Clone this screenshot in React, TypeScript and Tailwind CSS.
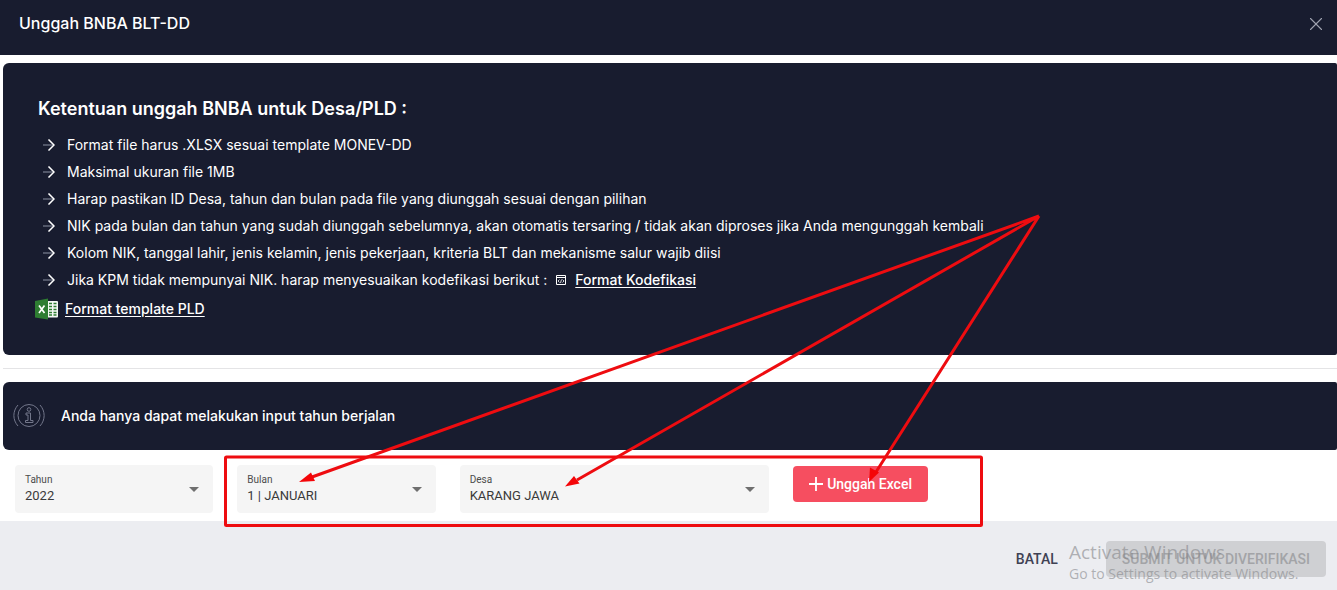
import type { ReactNode } from 'react'
import { LuX } from 'react-icons/lu'

interface SelectFieldProps {
  id: string
  label: string
  options: string[]
  className: string
}

const rules = [
  'Format file harus .XLSX sesuai template MONEV-DD',
  'Maksimal ukuran file 1MB',
  'Harap pastikan ID Desa, tahun dan bulan pada file yang diunggah sesuai dengan pilihan',
  'NIK pada bulan dan tahun yang sudah diunggah sebelumnya, akan otomatis tersaring / tidak akan diproses jika Anda mengunggah kembali',
  'Kolom NIK, tanggal lahir, jenis kelamin, jenis pekerjaan, kriteria BLT dan mekanisme salur wajib diisi',
]

const ArrowIcon = () => (
  <svg className="w-3 h-3 shrink-0" viewBox="0 0 12 12" fill="none">
    <path d="M0 6h10" stroke="#7b7f92" strokeWidth="1.2" />
    <path d="M5.500 .5L11 6l-5.500 5.500" stroke="#fff" strokeWidth="1.500" />
  </svg>
)

const ExcelIcon = () => (
  <svg className="w-6 h-6 shrink-0" viewBox="0 0 24 24">
    <rect x="11" y="4" width="12" height="16.5" rx="1" fill="#f4f7f4" />
    <path
      d="M14 6.5h3M18.5 6.5h3M14 9.5h3M18.5 9.5h3M14 12.5h3M18.5 12.5h3M14 15.5h3M18.5 15.5h3M14 18h3M18.5 18h3"
      stroke="#2e7d32"
      strokeWidth="1.4"
    />
    <path d="M0 4l13-2.500v21L0 20.500z" fill="#2e7d32" />
    <path d="M4 8.500l5.500 7.500M9.500 8.500L4 16" stroke="#fff" strokeWidth="1.700" />
  </svg>
)

const CodeFileIcon = () => (
  <svg className="w-3 h-3 shrink-0" viewBox="0 0 12 12" fill="none" stroke="#fff">
    <path d="M1.500 1.500h9v9h-9zM1.500 3.500h9" />
    <path d="M4.500 5.500L3 7l1.500 1.500M7.500 5.500L9 7 7.500 8.500M6.500 5.500L5.500 9" strokeWidth="0.800" />
  </svg>
)

const InfoIcon = () => (
  <svg
    className="w-8 h-6 shrink-0"
    viewBox="0 0 32 24"
    fill="none"
    stroke="#73778b"
    strokeWidth="1"
  >
    <circle cx="16" cy="11.500" r="11" />
    <path d="M5 1C-.5 7-.5 16 5 22M27 1c5.500 6 5.500 15 0 21" />
    <circle cx="16" cy="5.500" r="1.800" />
    <path d="M13 9h4.500v7.500H20v2h-7.500v-2h2.500v-5.500h-2z" />
  </svg>
)

const Rule = ({ children }: { children: ReactNode }): JSX.Element => (
  <li className="flex items-center gap-3 pl-[5px]">
    <ArrowIcon />
    {children}
  </li>
)

const SelectField = ({ id, label, options, className }: SelectFieldProps): JSX.Element => (
  <div
    className={`relative h-12 px-[10px] pt-2 rounded-sm bg-[#f5f5f5] font-[Roboto,sans-serif] ${className}`}
  >
    <label htmlFor={id} className="block text-[10px] leading-[14px] text-[#4c4c4c]">
      {label}
    </label>
    <select
      id={id}
      className="block w-full appearance-none bg-transparent text-[13px] leading-[18px] text-[#3a3a3a] outline-none"
    >
      {options.map((option) => (
        <option key={option}>{option}</option>
      ))}
    </select>
    <svg
      className="absolute right-3.5 top-1/2 w-2.5 h-[5px] -translate-y-0.5 pointer-events-none"
      viewBox="0 0 10 5"
    >
      <path d="M0 0h10L5 5z" fill="#6f6f6f" />
    </svg>
  </div>
)

const Annotations = () => (
  <svg
    className="absolute left-0 top-0 pointer-events-none"
    width="1337"
    height="590"
    viewBox="0 0 1337 590"
    fill="none"
    stroke="#ee0c10"
    strokeWidth="3"
  >
    <rect x="225.500" y="457" width="756" height="68.500" rx="1" />
    <path d="M1039 216L312 477M1039 216L577 480M1039 216L876 472" />
    <g fill="#f40508" stroke="none">
      <path d="M299 482l12-9.500 4 8.500z" />
      <path d="M565 486.500l9-10.500 5.500 7.500z" />
      <path d="M869 482l1-14.500 9 5z" />
    </g>
  </svg>
)

const App = (): JSX.Element => {
  return (
    <div className="relative min-h-screen flex flex-col overflow-hidden bg-white font-[Inter,sans-serif] text-white">
      <header className="flex items-start justify-between h-[55px] pl-[19px] pr-2.5 bg-[#181c2f]">
        <h1 className="pt-[11px] text-base leading-6 font-medium">Unggah BNBA BLT-DD</h1>
        <button type="button" aria-label="Tutup" className="mt-[13px] text-[#a0a3b0]">
          <LuX size={22} strokeWidth={1.2} />
        </button>
      </header>

      <main className="pl-[3px] pt-2">
        <section className="h-[292px] pt-8 pl-8 rounded-l-md rounded-r-xs bg-[#181c2f] text-sm">
          <h2 className="pl-[3px] text-lg leading-7 font-semibold">
            Ketentuan unggah BNBA untuk Desa/PLD :
          </h2>
          <ul className="pl-[3px] pt-2 leading-[27px]">
            {rules.map((rule) => (
              <Rule key={rule}>{rule}</Rule>
            ))}
            <Rule>
              <span className="flex items-center">
                Jika KPM tidak mempunyai NIK. harap menyesuaikan kodefikasi berikut :
                <a href="#kodefikasi" className="flex items-center gap-2 ml-2 font-medium">
                  <CodeFileIcon />
                  <span className="underline underline-offset-2">Format Kodefikasi</span>
                </a>
              </span>
            </Rule>
          </ul>
          <a href="#template" className="inline-flex items-center gap-1.5 mt-1 font-medium">
            <ExcelIcon />
            <span className="underline underline-offset-2">Format template PLD</span>
          </a>
        </section>

        <hr className="mt-[13px] border-[#e4e4e6]" />

        <div className="flex items-center gap-4 h-[68px] mt-[13px] pl-2.5 rounded-l-md rounded-r-xs bg-[#181c2f] text-sm font-medium">
          <InfoIcon />
          Anda hanya dapat melakukan input tahun berjalan
        </div>

        <form className="grid grid-cols-12 gap-x-6 items-start px-3 pt-[15px] pb-2">
          <SelectField id="tahun" label="Tahun" options={['2022']} className="col-span-2" />
          <SelectField id="bulan" label="Bulan" options={['1 | JANUARI']} className="col-span-2" />
          <SelectField id="desa" label="Desa" options={['KARANG JAWA']} className="col-span-3" />
          <button
            type="button"
            className="col-span-2 justify-self-start flex items-center gap-1 h-9 mt-px px-4 rounded bg-[#f64e60] font-[Roboto,sans-serif] text-sm font-medium"
          >
            <svg className="w-3.5 h-3.5" viewBox="0 0 14 14" stroke="#fff" strokeWidth="1.800">
              <path d="M7 0v14M0 7h14" />
            </svg>
            Unggah Excel
          </button>
        </form>
      </main>

      <footer className="flex-1 flex items-start justify-end gap-12 pt-5 pr-[11px] bg-[#ecedf1] font-[Roboto,sans-serif] text-sm font-medium">
        <button type="button" className="h-9 text-[#3f4254]">
          BATAL
        </button>
        <button type="submit" disabled className="h-9 px-4 rounded bg-[#cfd0d3] text-[#a3a4a7]">
          SUBMIT UNTUK DIVERIFIKASI
        </button>
      </footer>

      <div className="absolute right-8 bottom-1.5 w-[236px] font-['Open_Sans',sans-serif] text-[#85868a]/60 whitespace-nowrap pointer-events-none">
        <p className="text-[19px] leading-6">Activate Windows</p>
        <p className="text-sm leading-5">Go to Settings to activate Windows.</p>
      </div>

      <Annotations />
    </div>
  )
}

export default App
